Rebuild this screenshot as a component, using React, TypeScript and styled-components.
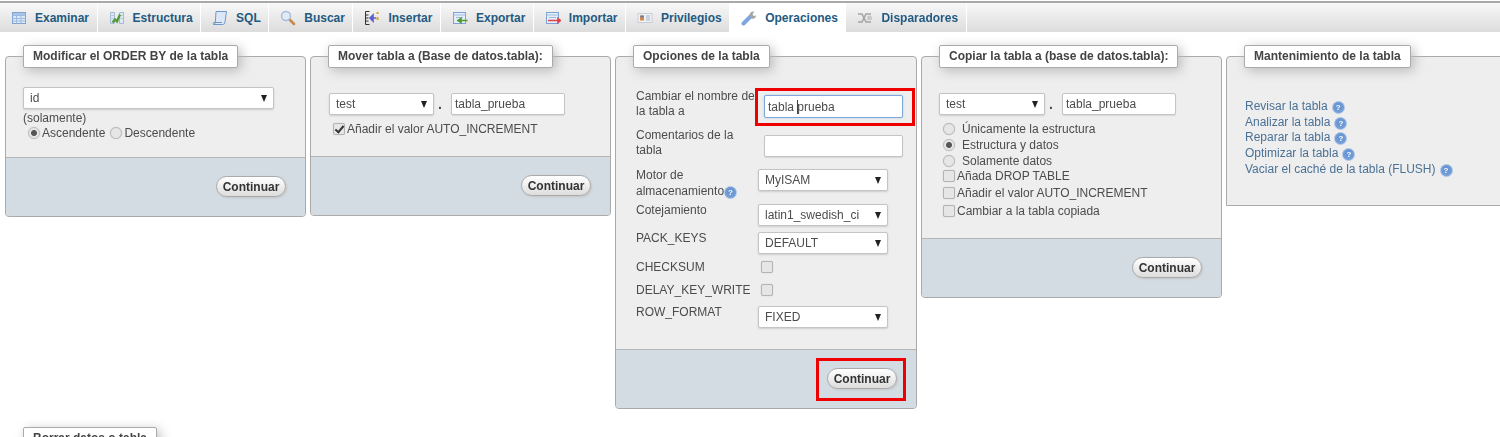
import React from 'react';
import styled, { createGlobalStyle } from 'styled-components';

const GlobalStyle = createGlobalStyle`
  html, body {
    margin: 0;
    padding: 0;
    height: 437px;
    overflow: hidden;
    background: #fff;
    font-family: "Liberation Sans", Arial, sans-serif;
    font-size: 12px;
    color: #4c4c4c;
  }
  #root {
    filter: blur(0.3px);
  }
`;

const TopLine = styled.div`
  height: 2px;
  margin-top: 1px;
  background: #a9a9a9;
`;

const TabBar = styled.ul`
  display: flex;
  height: 29px;
  margin: 0;
  padding: 0;
  list-style: none;
  background: linear-gradient(#f8f8f8, #dcdcdc);
`;

const Tab = styled.li<{ $active?: boolean }>`
  display: flex;
  align-items: center;
  gap: 8px;
  padding: 0 7.5px 0 11px;
  font-weight: bold;
  color: #235a81;
  border-right: 1px solid #fff;
  background: ${(p) => (p.$active ? '#fff' : 'transparent')};
  svg {
    width: 16px;
    height: 16px;
    flex: none;
  }
`;

const Content = styled.div`
  padding: 13px 0 0 5px;
`;

const PanelRow = styled.div`
  display: flex;
  align-items: flex-start;
  gap: 4px;
`;

const Panel = styled.fieldset<{ $width: number; $square?: boolean }>`
  flex: none;
  box-sizing: border-box;
  width: ${(p) => p.$width}px;
  min-width: 0;
  margin: 0;
  padding: 0;
  background: #eee;
  border: 1px solid #aaa;
  border-radius: ${(p) => (p.$square ? '4px 0 0 0' : '4px')};
`;

const Legend = styled.legend`
  box-sizing: border-box;
  height: 23px;
  line-height: 21px;
  margin-left: 17px;
  padding: 0 9px;
  font-weight: bold;
  color: #444;
  white-space: nowrap;
  background: #fff;
  border: 1px solid #aaa;
  border-radius: 2px;
  box-shadow: 3px 3px 12px #bbb;
`;

const Body = styled.div<{ $top: number; $bottom: number; $left?: number }>`
  padding: ${(p) => p.$top}px 8px ${(p) => p.$bottom}px ${(p) => p.$left ?? 17}px;
`;

const Footer = styled.div`
  display: flex;
  justify-content: flex-end;
  padding: 18px 19px 19px 0;
  background: #d3dce3;
  border-top: 1px solid #b5b5b5;
  border-radius: 0 0 3px 3px;
`;

const Button = styled.button`
  box-sizing: border-box;
  width: 70px;
  height: 21px;
  padding: 0;
  font: bold 12px "Liberation Sans", Arial, sans-serif;
  color: #333;
  background: linear-gradient(#fff, #ddd);
  border: 1px solid #aaa;
  border-radius: 11px;
  box-shadow: 1px 1px 2px #c4c4c4;
`;

const SelectWrap = styled.div<{ $width: number }>`
  position: relative;
  flex: none;
  width: ${(p) => p.$width}px;
  height: 22px;
  &::after {
    content: '';
    position: absolute;
    top: 8px;
    right: 7px;
    border-left: 3.5px solid transparent;
    border-right: 3.5px solid transparent;
    border-top: 7px solid #222;
    pointer-events: none;
  }
`;

const NativeSelect = styled.select`
  box-sizing: border-box;
  appearance: none;
  width: 100%;
  height: 100%;
  padding: 0 0 0 6px;
  font: 12px "Liberation Sans", Arial, sans-serif;
  color: #4c4c4c;
  background: #fff;
  border: 1px solid #c4c4c4;
  border-radius: 2px;
  box-shadow: 0 1px 2px #ccc;
`;

const TextInput = styled.input<{ $width: number; $focused?: boolean }>`
  box-sizing: border-box;
  flex: none;
  width: ${(p) => p.$width}px;
  height: ${(p) => (p.$focused ? 23 : 22)}px;
  padding: 0 3px;
  font: 12px "Liberation Sans", Arial, sans-serif;
  color: #4c4c4c;
  background: #fff;
  border: 1px solid ${(p) => (p.$focused ? '#7ea6da' : '#c4c4c4')};
  border-radius: 2px;
  box-shadow: ${(p) => (p.$focused ? '0 0 2px #a9c6ea' : '0 1px 1px #d8d8d8')};
  outline: none;
`;

const Target = styled.div<{ $inset: string }>`
  position: relative;
  flex: none;
  &::after {
    content: '';
    position: absolute;
    inset: ${(p) => p.$inset};
    border: 3px solid #ee0000;
    pointer-events: none;
  }
`;

const Caret = styled.span`
  position: absolute;
  top: 5px;
  left: 33px;
  width: 1px;
  height: 14px;
  background: #444;
`;

const Radio = styled.input.attrs({ type: 'radio' })`
  appearance: none;
  box-sizing: border-box;
  flex: none;
  width: 12px;
  height: 12px;
  margin: 0;
  border: 1px solid #bcbcbc;
  border-radius: 50%;
  background: #e6e6e6;
  box-shadow: 0 0 1px #bbb;
  &:checked {
    background: radial-gradient(circle, #555 0, #555 2.5px, #e6e6e6 3.5px);
  }
`;

const Checkbox = styled.input.attrs({ type: 'checkbox' })`
  appearance: none;
  position: relative;
  box-sizing: border-box;
  flex: none;
  width: 12px;
  height: 12px;
  margin: 0;
  border: 1px solid #b4b4b4;
  border-radius: 2px;
  background: #e6e6e6;
  box-shadow: 0 0 1px #bbb;
  &:checked::after {
    content: '';
    position: absolute;
    left: 3px;
    top: 0;
    width: 3px;
    height: 7px;
    border: solid #333;
    border-width: 0 2px 2px 0;
    transform: rotate(40deg);
  }
`;

const Line = styled.label<{ $height?: number; $gap?: number; $indent?: number; $top?: number }>`
  display: flex;
  align-items: center;
  gap: ${(p) => p.$gap ?? 5}px;
  height: ${(p) => p.$height ?? 15}px;
  margin-top: ${(p) => p.$top ?? 0}px;
  padding-left: ${(p) => p.$indent ?? 0}px;
  white-space: nowrap;
`;

const Choice = styled.span`
  display: inline-flex;
  align-items: center;
  gap: 2px;
`;

const Dot = styled.span`
  flex: none;
  box-sizing: border-box;
  width: 17px;
  padding-left: 4px;
  font-weight: bold;
  font-size: 14px;
  line-height: 14px;
`;

const TargetRow = styled.div`
  display: flex;
  align-items: center;
`;

const OptionRow = styled.div<{ $height: number }>`
  display: flex;
  align-items: flex-start;
  height: ${(p) => p.$height}px;
`;

const OptionLabel = styled.div`
  flex: none;
  width: 122px;
  line-height: 14.5px;
`;

const OptionControl = styled.div<{ $top: number; $left?: number }>`
  margin: ${(p) => p.$top}px 0 0 ${(p) => p.$left ?? 0}px;
`;

const MaintLink = styled.div`
  display: flex;
  align-items: center;
  gap: 4px;
  height: 15.7px;
  color: #4a7197;
  white-space: nowrap;
`;

const Help = styled.span`
  flex: none;
  display: inline-block;
  box-sizing: border-box;
  width: 13px;
  height: 13px;
  margin-top: 3px;
  border: 1px solid #a9c3e4;
  border-radius: 50%;
  font: bold 8px/11px "Liberation Sans", Arial, sans-serif;
  text-align: center;
  color: #fff;
  background: radial-gradient(circle at 50% 40%, #5f8fd0, #7ea6dc);
`;

const SecondRow = styled.div`
  margin-top: 18px;
`;

const Select = ({ width, value }: { width: number; value: string }) => (
  <SelectWrap $width={width}>
    <NativeSelect defaultValue={value}>
      <option>{value}</option>
    </NativeSelect>
  </SelectWrap>
);

const TableIcon = () => (
  <svg viewBox="0 0 16 16">
    <rect x="1.5" y="2.5" width="13" height="11" fill="#dce8f6" stroke="#7ea3d2" />
    <path d="M1.5 5.5h13M1.5 8.5h13M1.5 11h13M5.5 2.5v11M10 2.5v11" stroke="#9dbbe0" fill="none" />
    <rect x="2" y="3" width="12" height="2" fill="#a9c4e6" />
  </svg>
);

const StructureIcon = () => (
  <svg viewBox="0 0 16 16">
    <path d="M1.5 2.5h4v11h-4zM10.5 2.5h4v11h-4z" fill="#dfe9f5" stroke="#a3bad6" />
    <path d="M1.5 5.5h4M1.5 8.5h4M10.5 5.5h4M10.5 8.5h4" stroke="#b8cbe2" />
    <path d="M3.5 12.5L6 9.5l2 2 3-7" fill="none" stroke="#4f9a35" strokeWidth="2.2" />
  </svg>
);

const SqlIcon = () => (
  <svg viewBox="0 0 16 16">
    <path d="M4 1.5h10.5L13 12c-.2 1.6-1 2.5-2.5 2.5H1.5c1 0 1.6-.8 1.8-2z" fill="#dbe7f6" stroke="#6f97cc" />
    <path d="M1.5 14.5c-.6-1-.4-2 .3-2H10" fill="none" stroke="#6f97cc" />
  </svg>
);

const SearchIcon = () => (
  <svg viewBox="0 0 16 16">
    <path d="M9.5 9.5l4.5 4.5" stroke="#c68a4a" strokeWidth="2.6" strokeLinecap="round" />
    <circle cx="6" cy="6" r="4.5" fill="#dfeaf7" stroke="#a7bcd4" strokeWidth="1.4" />
  </svg>
);

const InsertIcon = () => (
  <svg viewBox="0 0 16 16">
    <path d="M5.5 1.5h-4v13h4M1.5 5h3M1.5 8h3M1.5 11h3" fill="none" stroke="#333" />
    <path d="M12 8H7M9 5L6 8l3 3z" stroke="#5b5ed0" strokeWidth="1.6" fill="#5b5ed0" />
    <rect x="12.5" y="2" width="2" height="2" fill="#d9a520" />
    <rect x="12.5" y="7" width="2" height="3" fill="#d9a520" />
  </svg>
);

const ExportIcon = () => (
  <svg viewBox="0 0 16 16">
    <rect x="1.5" y="2.5" width="12" height="11" fill="#e6eff9" stroke="#7ea3d2" />
    <path d="M1.5 5h12M4 7.5h7" stroke="#9dbbe0" />
    <path d="M15.5 10.5H7M9 8.5l-3 2 3 2z" stroke="#4f9a35" strokeWidth="1.6" fill="#4f9a35" />
  </svg>
);

const ImportIcon = () => (
  <svg viewBox="0 0 16 16">
    <rect x="1.5" y="2.5" width="12" height="11" fill="#e6eff9" stroke="#7ea3d2" />
    <path d="M1.5 5h12M4 7.5h7" stroke="#9dbbe0" />
    <path d="M3 10.5h10M13 8.5l2.5 2-2.5 2z" stroke="#e0404a" strokeWidth="1.6" fill="#e0404a" />
  </svg>
);

const PrivilegesIcon = () => (
  <svg viewBox="0 0 16 16">
    <rect x="1" y="3.5" width="14" height="9" fill="#eef1f5" stroke="#c9ced6" />
    <rect x="3" y="5.5" width="4" height="5" fill="#d98a4a" />
    <rect x="3.5" y="5.5" width="3" height="2" fill="#5a7fb8" />
    <path d="M9 6h4M9 8h4M9 10h4" stroke="#a9b2c0" />
  </svg>
);

const WrenchIcon = () => (
  <svg viewBox="0 0 16 16">
    <path d="M2.5 13.5L9.5 6.5" stroke="#7fa6e0" strokeWidth="4" strokeLinecap="round" />
    <path d="M8.5 5.5C8.5 2.5 11 1 13.5 1.5L11.5 4l1 2 2.5-.5C15 8 12.5 9.5 10.5 8.5z" fill="#a4a4a4" />
  </svg>
);

const TriggerIcon = () => (
  <svg viewBox="0 0 16 16">
    <path d="M1 4h4l4 8h5M1 12h4l4-8h5" fill="none" stroke="#a4a4a4" strokeWidth="1.6" />
    <circle cx="12.5" cy="8" r="2.5" fill="#c9c9c9" />
  </svg>
);

const tabs = [
  { label: 'Examinar', icon: <TableIcon /> },
  { label: 'Estructura', icon: <StructureIcon /> },
  { label: 'SQL', icon: <SqlIcon /> },
  { label: 'Buscar', icon: <SearchIcon /> },
  { label: 'Insertar', icon: <InsertIcon /> },
  { label: 'Exportar', icon: <ExportIcon /> },
  { label: 'Importar', icon: <ImportIcon /> },
  { label: 'Privilegios', icon: <PrivilegesIcon /> },
  { label: 'Operaciones', icon: <WrenchIcon />, active: true },
  { label: 'Disparadores', icon: <TriggerIcon /> },
];

const maintenance = [
  'Revisar la tabla',
  'Analizar la tabla',
  'Reparar la tabla',
  'Optimizar la tabla',
  'Vaciar el caché de la tabla (FLUSH)',
];

export default function App() {
  return (
    <>
      <GlobalStyle />
      <TopLine />
      <TabBar>
        {tabs.map((t) => (
          <Tab key={t.label} $active={t.active}>
            {t.icon}
            {t.label}
          </Tab>
        ))}
      </TabBar>
      <Content>
        <PanelRow>
          <Panel $width={301}>
            <Legend>Modificar el ORDER BY de la tabla</Legend>
            <Body $top={19} $bottom={17}>
              <Select width={251} value="id" />
              <Line $height={15} $top={1}>(solamente)</Line>
              <Line $indent={5}>
                <Choice>
                  <Radio name="order" defaultChecked />
                  Ascendente
                </Choice>
                <Choice>
                  <Radio name="order" />
                  Descendente
                </Choice>
              </Line>
            </Body>
            <Footer>
              <Button>Continuar</Button>
            </Footer>
          </Panel>

          <Panel $width={301}>
            <Legend>Mover tabla a (Base de datos.tabla):</Legend>
            <Body $top={25} $bottom={20} $left={18}>
              <TargetRow>
                <Select width={105} value="test" />
                <Dot>.</Dot>
                <TextInput $width={114} defaultValue="tabla_prueba" />
              </TargetRow>
              <Line $height={14} $top={7} $indent={4} $gap={2}>
                <Checkbox defaultChecked />
                Añadir el valor AUTO_INCREMENT
              </Line>
            </Body>
            <Footer>
              <Button>Continuar</Button>
            </Footer>
          </Panel>

          <Panel $width={302}>
            <Legend>Opciones de la tabla</Legend>
            <Body $top={21} $bottom={21} $left={20}>
              <OptionRow $height={39}>
                <OptionLabel>
                  Cambiar el nombre de
                  <br />
                  la tabla a
                </OptionLabel>
                <OptionControl $top={6} $left={6}>
                  <Target $inset="-7px -12px -8px -9px">
                    <TextInput $width={139} $focused defaultValue="tabla prueba" />
                    <Caret />
                  </Target>
                </OptionControl>
              </OptionRow>
              <OptionRow $height={40}>
                <OptionLabel>
                  Comentarios de la
                  <br />
                  tabla
                </OptionLabel>
                <OptionControl $top={7} $left={6}>
                  <TextInput $width={139} />
                </OptionControl>
              </OptionRow>
              <OptionRow $height={35}>
                <OptionLabel>
                  Motor de
                  <br />
                  almacenamiento
                  <Help>?</Help>
                </OptionLabel>
                <OptionControl $top={1}>
                  <Select width={130} value="MyISAM" />
                </OptionControl>
              </OptionRow>
              <OptionRow $height={28}>
                <OptionLabel>Cotejamiento</OptionLabel>
                <OptionControl $top={1}>
                  <Select width={130} value="latin1_swedish_ci" />
                </OptionControl>
              </OptionRow>
              <OptionRow $height={29}>
                <OptionLabel>PACK_KEYS</OptionLabel>
                <OptionControl $top={1}>
                  <Select width={130} value="DEFAULT" />
                </OptionControl>
              </OptionRow>
              <OptionRow $height={23}>
                <OptionLabel>CHECKSUM</OptionLabel>
                <OptionControl $top={1} $left={3}>
                  <Checkbox />
                </OptionControl>
              </OptionRow>
              <OptionRow $height={22}>
                <OptionLabel>DELAY_KEY_WRITE</OptionLabel>
                <OptionControl $top={1} $left={3}>
                  <Checkbox />
                </OptionControl>
              </OptionRow>
              <OptionRow $height={23}>
                <OptionLabel>ROW_FORMAT</OptionLabel>
                <OptionControl $top={1}>
                  <Select width={130} value="FIXED" />
                </OptionControl>
              </OptionRow>
            </Body>
            <Footer>
              <Target $inset="-10px -9px -12px -11px">
                <Button>Continuar</Button>
              </Target>
            </Footer>
          </Panel>

          <Panel $width={301}>
            <Legend>Copiar la tabla a (base de datos.tabla):</Legend>
            <Body $top={25} $bottom={18}>
              <TargetRow>
                <Select width={106} value="test" />
                <Dot>.</Dot>
                <TextInput $width={114} defaultValue="tabla_prueba" />
              </TargetRow>
              <Line $height={16} $top={6} $indent={4} $gap={7}>
                <Radio name="copy" />
                Únicamente la estructura
              </Line>
              <Line $height={16} $indent={4} $gap={7}>
                <Radio name="copy" defaultChecked />
                Estructura y datos
              </Line>
              <Line $height={15} $indent={4} $gap={7}>
                <Radio name="copy" />
                Solamente datos
              </Line>
              <Line $height={16} $indent={4} $gap={2}>
                <Checkbox />
                Añada DROP TABLE
              </Line>
              <Line $height={18} $indent={4} $gap={2}>
                <Checkbox />
                Añadir el valor AUTO_INCREMENT
              </Line>
              <Line $height={18} $indent={4} $gap={2}>
                <Checkbox />
                Cambiar a la tabla copiada
              </Line>
            </Body>
            <Footer>
              <Button>Continuar</Button>
            </Footer>
          </Panel>

          <Panel $width={400} $square>
            <Legend>Mantenimiento de la tabla</Legend>
            <Body $top={30} $bottom={29} $left={18}>
              {maintenance.map((m) => (
                <MaintLink key={m}>
                  {m}
                  <Help>?</Help>
                </MaintLink>
              ))}
            </Body>
          </Panel>
        </PanelRow>
        <SecondRow>
          <Panel $width={301}>
            <Legend>Borrar datos o tabla</Legend>
          </Panel>
        </SecondRow>
      </Content>
    </>
  );
}
